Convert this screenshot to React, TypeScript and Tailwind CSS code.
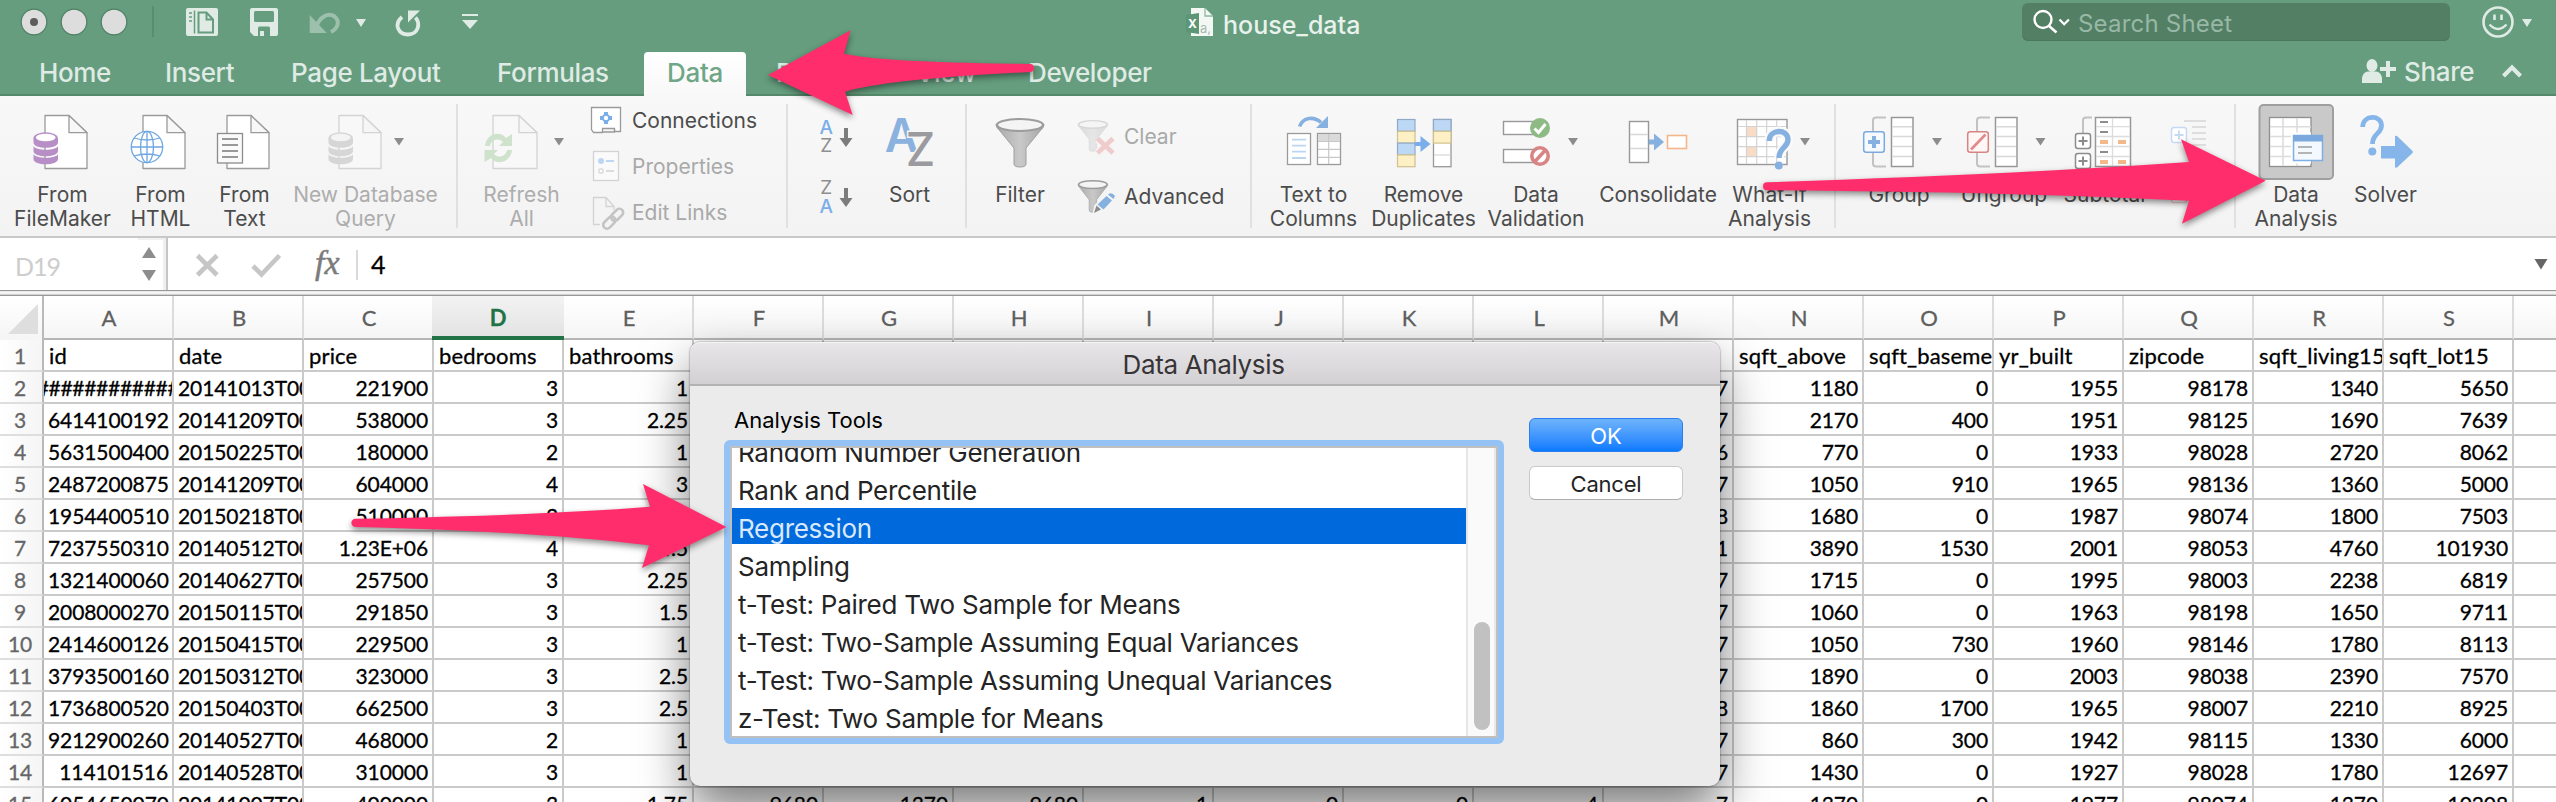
import type { ReactNode } from "react";

const COLS = "ABCDEFGHIJKLMNOPQRS".split("");

const HEAD: Record<string, string> = {
  A: "id", B: "date", C: "price", D: "bedrooms", E: "bathrooms",
  N: "sqft_above", O: "sqft_basement", P: "yr_built", Q: "zipcode", R: "sqft_living15", S: "sqft_lot15",
};

// A, B, C, D, E | M | N, O, P, Q, R, S
const DATA: string[][] = [
  ["############", "20141013T000000", "221900", "3", "1", "7", "1180", "0", "1955", "98178", "1340", "5650"],
  ["6414100192", "20141209T000000", "538000", "3", "2.25", "7", "2170", "400", "1951", "98125", "1690", "7639"],
  ["5631500400", "20150225T000000", "180000", "2", "1", "6", "770", "0", "1933", "98028", "2720", "8062"],
  ["2487200875", "20141209T000000", "604000", "4", "3", "7", "1050", "910", "1965", "98136", "1360", "5000"],
  ["1954400510", "20150218T000000", "510000", "3", "2", "8", "1680", "0", "1987", "98074", "1800", "7503"],
  ["7237550310", "20140512T000000", "1.23E+06", "4", "4.5", "11", "3890", "1530", "2001", "98053", "4760", "101930"],
  ["1321400060", "20140627T000000", "257500", "3", "2.25", "7", "1715", "0", "1995", "98003", "2238", "6819"],
  ["2008000270", "20150115T000000", "291850", "3", "1.5", "7", "1060", "0", "1963", "98198", "1650", "9711"],
  ["2414600126", "20150415T000000", "229500", "3", "1", "7", "1050", "730", "1960", "98146", "1780", "8113"],
  ["3793500160", "20150312T000000", "323000", "3", "2.5", "7", "1890", "0", "2003", "98038", "2390", "7570"],
  ["1736800520", "20150403T000000", "662500", "3", "2.5", "8", "1860", "1700", "1965", "98007", "2210", "8925"],
  ["9212900260", "20140527T000000", "468000", "2", "1", "7", "860", "300", "1942", "98115", "1330", "6000"],
  ["114101516", "20140528T000000", "310000", "3", "1", "7", "1430", "0", "1927", "98028", "1780", "12697"],
  ["6054650070", "20141007T000000", "400000", "3", "1.75", "7", "1370", "0", "1977", "98074", "1370", "10208"],
];
const SLOT: Record<string, number> = { A: 0, B: 1, C: 2, D: 3, E: 4, M: 5, N: 6, O: 7, P: 8, Q: 9, R: 10, S: 11 };
const LAST: Record<string, string> = { F: "9680", G: "1370", H: "9680", I: "1", J: "0", K: "0", L: "4" };

const TOOLS = [
  "Random Number Generation",
  "Rank and Percentile",
  "Regression",
  "Sampling",
  "t-Test: Paired Two Sample for Means",
  "t-Test: Two-Sample Assuming Equal Variances",
  "t-Test: Two-Sample Assuming Unequal Variances",
  "z-Test: Two Sample for Means",
];

/* ---------- ribbon pieces ---------- */

function Sep() {
  return <div className="mt-2 h-[124px] w-[2px] shrink-0 bg-[#e0e0e0]" />;
}

/* Ribbon artwork shares one coordinate space; x is the left edge of the item in it. */
function Art({ x, w, h = 86, y = 96, children }: { x: number; w: number; h?: number; y?: number; children: ReactNode }) {
  return (
    <svg className="block shrink-0" width={w} height={h} viewBox={`${x} ${y} ${w} ${h}`} fill="none">
      {children}
    </svg>
  );
}

function Item({ x, w, label, dim, children }: { x: number; w: number; label: string[]; dim?: boolean; children: ReactNode }) {
  return (
    <div className="flex shrink-0 flex-col items-center" style={{ width: w }}>
      <Art x={x} w={w}>{children}</Art>
      <div className={`whitespace-nowrap pl-px pt-px text-center text-[21px] leading-6 ${dim ? "text-[#adadad]" : "text-[#4c4c4c]"}`}>
        {label.map((l) => <div key={l}>{l}</div>)}
      </div>
    </div>
  );
}

function Doc({ x, w = 42, dim }: { x: number; w?: number; dim?: boolean }) {
  const s = dim ? "#d3d3d3" : "#9a9a9a";
  const r = x + w;
  return (
    <g stroke={s} strokeWidth="1.3" strokeLinejoin="round">
      <path d={`M${x} 115.5H${r - 18}L${r} 132.7V168.5H${x}Z`} fill={dim ? "#f8f8f8" : "#fff"} />
      <path d={`M${r - 18} 115.5V132.7H${r}Z`} fill={dim ? "#f6f6f6" : "#f8f8f8"} />
    </g>
  );
}

function Db({ x, c, top }: { x: number; c: string; top: string }) {
  return (
    <g fill={c}>
      {[0, 8.5, 16.5].map((d) => (
        <path key={d} d={`M${x} ${137.5 + d}v5c0 7 24.500 7 24.500 0v-5c-2 5-22.500 5-24.500 0z`} />
      ))}
      <ellipse cx={x + 12.2} cy="138" rx="12.200" ry="5.800" />
      <ellipse cx={x + 12.2} cy="137.500" rx="9.800" ry="3.800" fill={top} />
    </g>
  );
}

function Tri({ x, y = 138, w = 10, h = 7.5, c = "#8c8c8c" }: { x: number; y?: number; w?: number; h?: number; c?: string }) {
  return <path d={`M${x} ${y}h${w}l${-w / 2} ${h}z`} fill={c} />;
}

function ColBox({ x }: { x: number }) {
  return (
    <g>
      <rect x={x} y="117.500" width="21.500" height="49" fill="#fff" stroke="#989898" strokeWidth="1.500" />
      <path d={`M${x + 1} 126.700h19.500M${x + 1} 136.500h19.500M${x + 1} 146.500h19.500M${x + 1} 156.500h19.500`} stroke="#d8d8d8" strokeWidth="1.400" />
    </g>
  );
}

function Bracket({ x }: { x: number }) {
  return <path d={`M${x + 13} 117.500h-10q-3 0-3 3v43q0 3 3 3h10`} stroke="#c2c2c2" strokeWidth="2" />;
}

function Letter({ x, y, s, c, w = 400, children }: { x: number; y: number; s: number; c: string; w?: number; children: string }) {
  return <text x={x} y={y} fontSize={s} fontWeight={w} fill={c} textAnchor="middle" fontFamily="Inter, sans-serif">{children}</text>;
}

function Funnel({ t }: { t: string }) {
  return (
    <g transform={t}>
      <path d="M0 6C0 9 2 11 4 13L18 30V46q0 3 6 3t6-3V30L44 13C46 11 48 9 48 6z" fill="url(#steel)" stroke="#a0a0a0" strokeWidth="1" />
      <ellipse cx="24" cy="7" rx="23" ry="6" fill="#f4f4f4" stroke="#9c9c9c" strokeWidth="2.200" />
    </g>
  );
}

function PlusBox({ x, y, s = 15, c }: { x: number; y: number; s?: number; c: string }) {
  const m = s / 2;
  return (
    <g stroke={c}>
      <rect x={x} y={y} width={s} height={s} rx="2.500" fill="#fff" strokeWidth="1.500" />
      <path d={`M${x + 3} ${y + m}h${s - 6}M${x + m} ${y + 3}v${s - 6}`} strokeWidth="2" />
    </g>
  );
}

function Question({ t, w = 5.4, c }: { t: string; w?: number; c: string }) {
  return (
    <g transform={t}>
      <path d="M2.700 11C2.700 -1.500 21.500 -1.500 21.500 9.500C21.500 18 12.500 17 12.500 28" stroke={c} strokeWidth={w} />
      <circle cx="12.300" cy="35.500" r="4" fill={c} />
    </g>
  );
}

function SmallRow({ art, label, dim }: { art: ReactNode; label: string; dim?: boolean }) {
  return (
    <div className="flex h-[46px] items-center">
      {art}
      <span className={`text-[21px] leading-6 ${dim ? "text-[#a9a9a9]" : "text-[#4c4c4c]"}`}>{label}</span>
    </div>
  );
}

function Ribbon() {
  return (
    <div className="flex h-[142px] shrink-0 border-b-2 border-[#c8c8c8] bg-gradient-to-b from-[#f8f8f8] to-[#f3f3f3] pl-3">
      <svg width="0" height="0" className="block">
        <defs>
          <linearGradient id="steel"><stop offset="0" stopColor="#a9a9a9" /><stop offset=".5" stopColor="#c9c9c9" /><stop offset="1" stopColor="#a6a6a6" /></linearGradient>
        </defs>
      </svg>
      <Item x={12} w={100} label={["From", "FileMaker"]}>
        <Doc x={45} /><Db x={33.5} c="#b78fc6" top="#fff" />
      </Item>
      <Item x={112} w={96} label={["From", "HTML"]}>
        <Doc x={143} />
        <g stroke="#6ea6e0" strokeWidth="1.300">
          <circle cx="147" cy="147" r="15.700" fill="#fff" />
          <ellipse cx="147" cy="147" rx="6.500" ry="15.700" />
          <path d="M147 131v32M131 147h32M134 138q13 4 26 0M134 156q13 -4 26 0" />
        </g>
      </Item>
      <Item x={208} w={72} label={["From", "Text"]}>
        <Doc x={227} />
        <rect x="217.500" y="133.500" width="25" height="29.500" fill="#fafafa" stroke="#8c8c8c" strokeWidth="1.300" />
        <path d="M222 139h16M222 145h16M222 151h16M222 157h16" stroke="#999" strokeWidth="1.800" />
      </Item>
      <Item x={280} w={170} label={["New Database", "Query"]} dim>
        <Doc x={339} dim /><Db x={328.5} c="#d6d6d6" top="#f4f4f4" /><Tri x={394} />
      </Item>
      <div className="w-[6px] shrink-0" />
      <Sep />
      <Item x={458} w={126} label={["Refresh", "All"]} dim>
        <Doc x={493} w={44} dim /><Tri x={554} />
        <g fill="#cfe2cc">
          <path d="M485 146C486 134 500 130 506 138L512 134V146H499L503 142C498 137 491 140 490 146z" />
          <path d="M512 150C511 162 497 166 491 158L484.500 162V150H498L494 154C499 159 506 156 507 150z" />
        </g>
      </Item>
      <div className="flex w-[202px] shrink-0 flex-col pt-[2px]">
        <SmallRow label="Connections" art={
          <Art x={584} w={48} y={98} h={46}>
            <path d="M591.500 107.500h29v24h-6v-3h-12v4h-9l-2-3z" fill="#fff" stroke="#9a9a9a" strokeWidth="1.300" />
            <path d="M602.500 132h12v-3" stroke="#9a9a9a" strokeWidth="1.300" />
            <rect x="604" y="112" width="4" height="4" fill="#79aeea" /><rect x="604" y="120" width="4" height="4" fill="#79aeea" />
            <rect x="600" y="116" width="4" height="4" fill="#79aeea" /><rect x="608" y="116" width="4" height="4" fill="#79aeea" />
            <circle cx="606" cy="118" r="3.200" stroke="#79aeea" strokeWidth="2" />
          </Art>} />
        <SmallRow dim label="Properties" art={
          <Art x={584} w={48} y={144} h={46}>
            <rect x="593.500" y="151.500" width="25" height="29" fill="#fafafa" stroke="#d3d3d3" strokeWidth="1.300" />
            <circle cx="601" cy="161" r="3" fill="#bcd7f4" /><path d="M606 161h8" stroke="#bcd7f4" strokeWidth="2" />
            <circle cx="601" cy="171" r="2.200" stroke="#dcdcdc" strokeWidth="1.500" /><path d="M606 171h8" stroke="#dcdcdc" strokeWidth="2" />
          </Art>} />
        <SmallRow dim label="Edit Links" art={
          <Art x={584} w={48} y={190} h={46}>
            <path d="M600 224.500H593.500V197.500H606L614 206.500M606 197.500V206.500H614V210" stroke="#d3d3d3" strokeWidth="1.300" />
            <g transform="rotate(-45 613 218.500)" stroke="#c4c4c4" strokeWidth="2.600">
              <rect x="600.500" y="215" width="14" height="7.500" rx="3.700" /><rect x="611.500" y="215" width="14" height="7.500" rx="3.700" />
            </g>
          </Art>} />
      </div>
      <Sep />
      <Art x={788} w={82} h={140}>
        <Letter x={826.3} y={134} s={19} c="#7aaeea" w={500}>A</Letter>
        <Letter x={826.3} y={152} s={19} c="#8e8e8e">Z</Letter>
        <path d="M844 128h4v10h4.500l-6.500 9-6.500-9h4.500z" fill="#7c7c7c" />
        <Letter x={826.3} y={194} s={19} c="#8e8e8e">Z</Letter>
        <Letter x={826.3} y={212.5} s={19} c="#7aaeea" w={500}>A</Letter>
        <path d="M844 188h4v10h4.500l-6.500 9-6.500-9h4.500z" fill="#7c7c7c" />
      </Art>
      <Item x={870} w={78} label={["Sort"]}>
        <Letter x={901.5} y={152} s={46} c="#8bb2df" w={600}>A</Letter>
        <text x="920.500" y="166" fontSize="46" fontWeight="500" fill="#9b9b9f" stroke="#f6f6f6" strokeWidth="3" paintOrder="stroke" textAnchor="middle" fontFamily="Inter, sans-serif">Z</text>
      </Item>
      <div className="w-[17px] shrink-0" />
      <Sep />
      <Item x={967} w={105} label={["Filter"]}><Funnel t="translate(996 118)" /></Item>
      <div className="flex w-[178px] shrink-0 flex-col pt-[11px]">
        <div className="flex h-[59px] items-center">
          <Art x={1072} w={52} y={107} h={59}>
            <g opacity=".35"><Funnel t="translate(1078 120) scale(.62 .64)" /></g>
            <path d="M1098 139l15 14M1113 139l-15 14" stroke="#f5f5f5" strokeWidth="8" />
            <path d="M1097.500 138.500l15.500 14.500M1113 138.500l-15.500 14.500" stroke="#efcbcb" strokeWidth="4.500" />
          </Art>
          <span className="text-[21px] leading-6 text-[#a9a9a9]">Clear</span>
        </div>
        <div className="flex h-[59px] items-center">
          <Art x={1072} w={52} y={166} h={59}>
            <Funnel t="translate(1078 180) scale(.62 .66)" />
            <path d="M1092.500 214l2-9 14-13 7.500 6-14 14z" fill="#f5f5f5" />
            <path d="M1094 213l2.500-7.500 4.500 4z" fill="#8c8c8c" />
            <path d="M1097.500 204.500l9-8.500 5.500 4.500-8.500 9z" fill="#86b0e0" />
            <path d="M1108 194.800l1.500-1.300q3-1 5.500 2.500l-1.500 3z" fill="#86b0e0" />
          </Art>
          <span className="pt-[2px] text-[21px] leading-6 text-[#4c4c4c]">Advanced</span>
        </div>
      </div>
      <Sep />
      <Item x={1252} w={122} label={["Text to", "Columns"]}>
        <path d="M1299.500 126.500C1303 117 1314 116 1321 122.500" stroke="#86b0e0" strokeWidth="3.600" />
        <path d="M1328 116v12h-12z" fill="#86b0e0" />
        <rect x="1287.500" y="133.500" width="23" height="31" fill="#fff" stroke="#9a9a9a" strokeWidth="1.300" />
        <path d="M1292 139.700h14M1292 145.700h14M1292 151.700h14M1292 158h14" stroke="#bcd6f1" strokeWidth="1.800" />
        <rect x="1317.500" y="133.500" width="23" height="31" fill="#fff" stroke="#9a9a9a" strokeWidth="1.300" />
        <rect x="1318" y="134" width="22" height="7.500" fill="#dadada" />
        <path d="M1328.700 134v30M1318 141.500h22M1318 149.300h22M1318 157.300h22" stroke="#c8c8c8" strokeWidth="1.200" />
      </Item>
      <Item x={1374} w={98} label={["Remove", "Duplicates"]}>
        {["#bcd8f4", "#fdf0c4", "#bcd8f4", "#fdf0c4"].map((c, i) => (
          <rect key={i} x="1397.500" y={119.5 + i * 11.8} width="17.500" height="11.800" fill={c} stroke={i % 2 ? "#cfc08e" : "#8fa9c6"} strokeWidth="1.200" />
        ))}
        <rect x="1433.500" y="119.500" width="17.500" height="47.200" fill="#fff" stroke="#989898" strokeWidth="1.300" />
        <rect x="1433.500" y="119.500" width="17.500" height="11.800" fill="#bcd8f4" stroke="#8fa9c6" strokeWidth="1.200" />
        <rect x="1433.500" y="131.300" width="17.500" height="11.800" fill="#fdf0c4" stroke="#cfc08e" strokeWidth="1.200" />
        <path d="M1434 155h16.500" stroke="#d8d8d8" strokeWidth="1.300" />
        <path d="M1415 142h5.500v-6l10 8-10 8v-6h-5.500z" fill="#7aaeea" />
      </Item>
      <Item x={1472} w={127} label={["Data", "Validation"]}>
        <rect x="1503.500" y="121.500" width="32" height="13" fill="#fff" stroke="#989898" strokeWidth="1.400" />
        <rect x="1503.500" y="149.500" width="32" height="13" fill="#fff" stroke="#989898" strokeWidth="1.400" />
        <circle cx="1540" cy="128" r="10" fill="#8ebb85" />
        <path d="M1534.500 128.500l4 4 7-8.500" stroke="#fff" strokeWidth="3" />
        <circle cx="1540" cy="156" r="8.200" fill="#fff" stroke="#d98484" strokeWidth="3.600" />
        <path d="M1545 150.500l-10 11" stroke="#d98484" strokeWidth="3.400" />
        <Tri x={1568} />
      </Item>
      <Item x={1599} w={117} label={["Consolidate"]}>
        <rect x="1629.500" y="121.500" width="19" height="41" fill="#fff" stroke="#989898" strokeWidth="1.400" />
        <path d="M1630 134.500h18M1630 148.500h18" stroke="#d8d8d8" strokeWidth="1.300" />
        <path d="M1649 139.500h5v-6l10 8.500-10 8.500v-6h-5z" fill="#86b0e0" />
        <rect x="1667.500" y="135.500" width="19" height="13" fill="#fff" stroke="#f3b68a" strokeWidth="1.600" />
      </Item>
      <Item x={1716} w={106} label={["What-If", "Analysis"]}>
        <rect x="1737.500" y="119.500" width="49.500" height="45" fill="#fff" stroke="#989898" strokeWidth="1.400" />
        <rect x="1746.500" y="126.500" width="10" height="10" fill="#f9dcc5" /><rect x="1746.500" y="146.700" width="10" height="10" fill="#f9dcc5" />
        <path d="M1746.500 120v44M1756.700 120v44M1766.700 120v44M1776.700 120v44M1738 126.500h48.500M1738 136.700h48.500M1738 146.700h48.500M1738 156.700h48.500" stroke="#d3d3d3" strokeWidth="1.200" />
        <Question t="translate(1766.500 130)" w={10} c="#fafafa" />
        <Question t="translate(1766.500 130)" c="#86b0e0" />
        <Tri x={1800} />
      </Item>
      <div className="w-[12px] shrink-0" />
      <Sep />
      <Item x={1836} w={125} label={["Group"]}>
        <Bracket x={1873} /><ColBox x={1891.5} />
        <rect x="1863.700" y="131.700" width="20.600" height="20.600" rx="2.500" fill="#f6faff" stroke="#7ea9dc" strokeWidth="1.500" />
        <path d="M1868 142h12M1874 136v12" stroke="#86b0e0" strokeWidth="4" />
        <Tri x={1932} />
      </Item>
      <Item x={1961} w={85} label={["Ungroup"]}>
        <Bracket x={1977} /><ColBox x={1995.5} />
        <rect x="1967.700" y="131.700" width="20.600" height="20.600" rx="2.500" fill="#fff6f6" stroke="#d98484" strokeWidth="1.500" />
        <path d="M1971 149.500l14.500-15" stroke="#e08b8b" strokeWidth="2.600" />
        <Tri x={2035.5} />
      </Item>
      <Item x={2046} w={116} label={["Subtotal"]}>
        <path d="M2092 117.500h-6q-3 0-3 3v13" stroke="#c2c2c2" strokeWidth="2" />
        <rect x="2095.500" y="117.500" width="35" height="49" fill="#fff" stroke="#989898" strokeWidth="1.500" />
        <path d="M2112.500 118v48M2096 126.700h34M2096 136.500h34M2096 146.500h34M2096 156.500h34" stroke="#dcdcdc" strokeWidth="1.300" />
        <path d="M2100 122h8M2100 132h8M2100 152h8" stroke="#8c8c8c" strokeWidth="2" />
        <path d="M2100 142h8M2118 142h8M2100 162h8M2118 162h8" stroke="#f3b98a" strokeWidth="4" />
        <PlusBox x={2075.5} y={133.5} c="#8c8c8c" /><PlusBox x={2075.5} y={153.5} c="#8c8c8c" />
      </Item>
      <Art x={2162} w={72} h={140}>
        <path d="M2184 121h22M2192 127h14M2192 133h14M2192 139h14M2192 145h14" stroke="#dedede" strokeWidth="1.800" />
        <PlusBox x={2171.5} y={127.5} c="#c6dbf3" />
        <rect x="2171.500" y="187.500" width="15" height="15" rx="2.500" fill="#fff" stroke="#efcaca" strokeWidth="1.500" />
      </Art>
      <Sep />
      <Item x={2236} w={119} label={["Data", "Analysis"]}>
        <rect x="2259.500" y="105" width="73.500" height="74" rx="4" fill="#c9c9c9" stroke="#9f9f9f" strokeWidth="2" />
        <rect x="2269.500" y="117.500" width="41.500" height="49" fill="#fff" stroke="#8f8f8f" strokeWidth="1.300" />
        <path d="M2283 118v48M2297 118v48M2270 126.700h41M2270 136.500h41M2270 146.500h41M2270 156.500h41" stroke="#dcdcdc" strokeWidth="1.600" />
        <rect x="2291" y="132.500" width="20" height="31" fill="#fff" />
        <rect x="2293.500" y="135.500" width="29" height="25" fill="#f4f8ff" stroke="#7eaee6" strokeWidth="1.500" />
        <rect x="2293" y="135" width="30" height="6.500" fill="#7ba9de" />
        <path d="M2298 147h14M2298 153h14" stroke="#b4b4b4" strokeWidth="1.800" />
      </Item>
      <Item x={2355} w={60} label={["Solver"]}>
        <Question t="translate(2360 116)" c="#86b5ea" w={4.8} />
        <path d="M2381 146h14v-9q0-2 2-1l15.500 15q1 1 0 2l-15.500 14.500q-2 1-2-1v-8h-14z" fill="#86b5ea" />
      </Item>
    </div>
  );
}

/* ---------- window chrome ---------- */

const LIGHT = "#dfebe4";

function TitleBar() {
  return (
    <div className="flex h-[44px] shrink-0 items-start">
      <svg className="block shrink-0" width="500" height="44" viewBox="0 0 500 44" fill="none">
        {[34, 74, 114].map((x) => <circle key={x} cx={x} cy="22" r="12.800" fill="#dddddd" stroke="#4f8065" strokeWidth="1.200" />)}
        <circle cx="34" cy="22" r="4" fill="#5d5d5d" />
        <path d="M153 6v31" stroke="#558a6b" strokeWidth="1.600" />
        <rect x="186" y="8" width="32" height="28" rx="2" fill={LIGHT} />
        <path d="M194.500 10.500v23M189 13h3M189 17h3M189 21h3" stroke="#659d7e" strokeWidth="1.500" />
        <path d="M198.500 12.500h8l6.500 7v13h-14.500zM206.500 12.500v7h6.500" stroke="#659d7e" strokeWidth="2" />
        <path d="M252 8h24q2 0 2 2v24q0 2-2 2h-22l-4-4V10q0-2 2-2z" fill={LIGHT} />
        <rect x="254" y="11" width="20" height="11" rx="1.500" fill="#659d7e" />
        <path d="M258 36v-8q0-1.500 1.500-1.500h9q1.500 0 1.500 1.500v8h-6v-5h-4v5z" fill="#659d7e" />
        <path d="M309.700 15v18h17z" fill="#9cc0ab" />
        <path d="M316 27C320 17 328 12 334.500 16.500C340 21 338.500 28 331 32" stroke="#9cc0ab" strokeWidth="4" />
        <Tri x={356} y={19} h={8} c={LIGHT} />
        <path d="M402 17C393 25 399 34.500 408 34.500C418 34.500 421 24 415.500 17.500" stroke={LIGHT} strokeWidth="3.800" />
        <path d="M408 10.500h12l-12 12z" fill={LIGHT} />
        <path d="M462 15h16" stroke={LIGHT} strokeWidth="2" />
        <Tri x={462} y={20} w={16} h={9} c={LIGHT} />
      </svg>
      <div className="flex flex-1 pl-[686px]">
        <svg className="mt-2 block shrink-0" width="28" height="30" viewBox="0 0 28 30" fill="none">
          <path d="M5 0h14l8 8v20H5z" fill="#f3f8f5" />
          <path d="M19 0v8h8" stroke="#8fb79f" strokeWidth="1.300" />
          <path d="M0 7l13-2v21l-13-2z" fill="#5d9676" />
          <text x="6.500" y="20" fontSize="12" fontWeight="700" fill="#fff" textAnchor="middle" fontFamily="Inter, sans-serif">X</text>
          <text x="19.500" y="25" fontSize="13" fill="#a9b8af" textAnchor="middle" fontFamily="Inter, sans-serif">a,</text>
        </svg>
        <span className="ml-[9px] mt-[9px] text-[25px] font-medium leading-8 tracking-[0px] text-[#e9f2ed]">house_data</span>
      </div>
      <div className="mt-[3px] flex h-[38px] w-[428px] shrink-0 items-center rounded-md border-b border-[#4c775d] bg-[#537f65]">
        <svg className="block shrink-0" width="56" height="38" viewBox="2022 3 56 38" fill="none" stroke="#fff">
          <circle cx="2043" cy="19.500" r="8.500" strokeWidth="2.400" />
          <path d="M2048.500 25.500l8 7" strokeWidth="2.600" />
          <path d="M2059.500 19.500l4.700 4.700 4.700-4.700" strokeWidth="2.200" />
        </svg>
        <span className="pt-[4px] text-[24px] leading-8 tracking-[0.2px] text-[#98b8a5]">Search Sheet</span>
      </div>
      <svg className="block shrink-0" width="106" height="44" viewBox="2450 0 106 44" fill="none" stroke={LIGHT}>
        <circle cx="2498" cy="22" r="14.500" strokeWidth="2.600" />
        <path d="M2494.500 14.500v5.500M2501.500 14.500v5.500" strokeWidth="2.600" />
        <path d="M2489.500 24.500q8.500 9 17 0" strokeWidth="2.400" />
        <g stroke="none"><Tri x={2522} y={19} h={8} c={LIGHT} /></g>
      </svg>
    </div>
  );
}

function Tabs() {
  return (
    <div className="flex h-[52px] shrink-0 border-b-2 border-[#55896a] text-[26px] font-medium leading-[32px] tracking-[-0.35px] text-[#dfebe4]">
      <div className="ml-[39px] w-[126px] pt-[13px]">Home</div>
      <div className="w-[126px] pt-[13px]">Insert</div>
      <div className="w-[206px] whitespace-nowrap pt-[13px]">Page Layout</div>
      <div className="w-[147px] pt-[13px]">Formulas</div>
      <div className="mt-[8px] h-[44px] w-[102px] rounded-t bg-gradient-to-b from-white to-[#f8f8f8] pt-[5px] text-center text-[#6fa686]">Data</div>
      <div className="w-[144px] pl-[30px] pt-[13px]">Review</div>
      <div className="w-[138px] pl-[26px] pt-[13px]">View</div>
      <div className="flex-1 pt-[13px]">Developer</div>
      <svg className="block shrink-0" width="44" height="50" viewBox="2360 44 44 50" fill="none">
        <ellipse cx="2372" cy="65.500" rx="5.500" ry="6.500" fill={LIGHT} />
        <path d="M2362 83v-5q1-6 6-6.500h8q5 .5 6 6.500v5z" fill={LIGHT} />
        <path d="M2380 69h16M2388 61v16" stroke={LIGHT} strokeWidth="4" />
      </svg>
      <div className="w-[90px] pt-[12px]">Share</div>
      <svg className="block shrink-0" width="62" height="50" viewBox="2494 44 62 50" fill="none">
        <path d="M2503.500 76l8.500-8.500 8.500 8.500" stroke={LIGHT} strokeWidth="4.200" />
      </svg>
    </div>
  );
}

function FormulaBar() {
  return (
    <div className="flex h-[52px] shrink-0 bg-white font-['Lato',sans-serif]">
      <div className="flex w-[168px] shrink-0 items-center justify-between border-r-2 border-[#c6c6c6] pl-[15px]">
        <span className="pt-[4px] text-[25px] leading-8 tracking-[-1px] text-[#cdcdcd]">D19</span>
        <svg className="block" width="28" height="52" viewBox="138 238 28 52">
          <path d="M142 258h14l-7-11zM142 270h14l-7 11z" fill="#8d8d8d" />
          <path d="M138 238h28v52h-3v-50h-25z" fill="#f0f0f0" />
        </svg>
      </div>
      <svg className="block shrink-0" width="200" height="52" viewBox="168 238 200 52" fill="none">
        <path d="M197.500 255.500l19.500 19.500M217 255.500l-19.500 19.500" stroke="#c6c6c6" strokeWidth="4.600" />
        <path d="M253 266l8.500 8.500 18-19" stroke="#c6c6c6" strokeWidth="4.600" />
        <text x="315" y="273.500" fontSize="34" fontStyle="italic" fill="#7b7b7b" fontFamily="'Liberation Serif', serif" stroke="#7b7b7b" strokeWidth=".5">fx</text>
        <path d="M357 250v30" stroke="#dadada" strokeWidth="2" />
      </svg>
      <span className="flex-1 pl-[3px] pt-[10px] text-[25px] leading-8 text-black [-webkit-text-stroke:0.3px]">4</span>
      <svg className="block shrink-0" width="30" height="52" viewBox="2526 238 30 52"><Tri x={2534.5} y={259} w={13} h={10.5} c="#666" /></svg>
    </div>
  );
}

/* ---------- sheet ---------- */

const CELL = "h-8 w-[130px] shrink-0 overflow-hidden whitespace-nowrap border-b-2 border-r-2 border-[#cacaca] px-[4px] pt-px leading-[30px]";

function Sheet() {
  return (
    <div className="min-h-0 flex-1 overflow-hidden bg-white font-['Lato',sans-serif] text-[21px] tracking-[-0.1px] text-black [-webkit-text-stroke:0.3px]">
      <div className="flex h-[44px] w-[2644px] bg-gradient-to-b from-white to-[#f5f5f5] text-[22px]">
        <div className="w-[44px] shrink-0 border-r-2 border-r-[#b9b9b9]">
          <svg className="block" width="42" height="42" viewBox="0 0 42 42"><path d="M8 38h30V8z" fill="#dedede" /></svg>
        </div>
        {COLS.map((c) =>
          c === "D" ? (
            <div key={c} className="-ml-[2px] w-[132px] shrink-0 border-b-4 border-[#217346] bg-gradient-to-b from-[#f3f3f3] to-[#e3e3e3] pt-[2px] text-center font-bold leading-[40px] text-[#217346]">D</div>
          ) : (
            <div key={c} className="w-[130px] shrink-0 border-b-2 border-r-2 border-b-[#b5b5b5] border-r-[#dcdcdc] pl-[2px] pt-[2px] text-center leading-[40px] text-[#5f5f5f]">{c}</div>
          ),
        )}
        <div className="w-[130px] shrink-0 border-b-2 border-[#b5b5b5]" />
      </div>
      {[null, ...DATA].map((row, i) => (
        <div key={i} className="flex h-8 w-[2644px]">
          <div className="w-[44px] shrink-0 border-b-2 border-r-2 border-b-[#dedede] border-r-[#b9b9b9] bg-gradient-to-r from-white to-[#f5f5f5] pr-[2px] pt-px text-center leading-[30px] text-[#666]">{i + 1}</div>
          {COLS.map((c) => {
            if (!row) return <div key={c} className={`${CELL} pl-[5px] text-[22px] tracking-[0.15px]`}>{HEAD[c] ?? ""}</div>;
            const v = SLOT[c] !== undefined ? row[SLOT[c]] : i === 14 ? LAST[c] ?? "" : "";
            if (v.startsWith("#")) return <div key={c} className={`${CELL} flex justify-center tracking-[-0.3px]`}><span>{v}</span></div>;
            return <div key={c} className={`${CELL} ${c === "B" ? "text-left" : "text-right"}`}>{v}</div>;
          })}
          <div className={CELL} />
        </div>
      ))}
    </div>
  );
}

/* ---------- dialog ---------- */

function Dialog() {
  return (
    <div className="absolute left-[690px] top-[342px] flex h-[444px] w-[1030px] flex-col overflow-visible rounded-[10px] bg-[#ebebeb] shadow-[0_24px_50px_rgba(0,0,0,0.52),0_0_2px_rgba(0,0,0,0.6)]">
      <div className="flex h-[44px] shrink-0 items-center justify-center rounded-t-[10px] border-b-2 border-t border-[#b4b2b4] border-t-[#f6f5f6] bg-gradient-to-b from-[#e9e6e9] to-[#d2d0d2] pr-[3px] pt-[2px] text-[26px] tracking-[-0.35px] text-[#373437]">Data Analysis</div>
      <div className="flex px-[34px]">
        <div className="w-[780px] pt-[20px]">
          <div className="pl-[10px] text-[22px] leading-7 text-black">Analysis Tools</div>
          <div className="mt-[6px] h-[304px] rounded-[6px] bg-[#94c2f4] p-[6px]">
            <div className="flex h-[292px] overflow-hidden border-2 border-[#bfbfbf] bg-white">
              <div className="-mt-[16px] w-[734px]">
                {TOOLS.map((t) => (
                  <div key={t} className={`mb-[2px] h-[36px] whitespace-nowrap pl-[6px] pt-[5px] text-[26px] leading-[32px] tracking-[-0.27px] ${t === "Regression" ? "bg-[#0069dc] text-[#d9e9fb]" : "text-[#242424]"}`}>{t}</div>
                ))}
              </div>
              <div className="w-[30px] border-l-2 border-r-2 border-l-[#e6e6e6] border-r-[#e9e9e9] bg-[#fafafa] pl-[6px] pt-[174px]">
                <div className="h-[108px] w-[16px] rounded-full bg-[#c1c1c1]" />
              </div>
            </div>
          </div>
        </div>
        <div className="ml-[25px] flex w-[154px] flex-col gap-[14px] pt-[32px] text-[22px]">
          <div className="flex h-[34px] items-center justify-center rounded-[6px] border border-[#2a7ff0] bg-gradient-to-b from-[#6db3fa] to-[#067aff] pt-[3px] text-white">OK</div>
          <div className="flex h-[34px] items-center justify-center rounded-[6px] border border-[#c9c9c9] border-b-[#adadad] bg-white pt-[2px] tracking-[-0.2px] text-[#242424]">Cancel</div>
        </div>
      </div>
    </div>
  );
}

function Pointers() {
  return (
    <svg className="pointer-events-none absolute left-0 top-0 drop-shadow-[0_3px_3px_rgba(0,0,0,0.45)]" width="2556" height="802" viewBox="0 0 2556 802" fill="#ff2d6b">
      <path d="M768 75L850.600 30.300L844 53.700C880 61 940 62.500 1030 64A4 4 0 0 1 1030 72C930 77 870 84 845 91.700L852.700 115Z" />
      <path d="M2265.700 180.700L2181 139.300L2189 162Q2010 174.500 1767 182.300A4 4 0 0 0 1767 190.300Q2010 192 2189 200.700L2182 223.700Z" />
      <path d="M726.400 527L643 484L650 506.700Q540 515.500 355.500 518.700A4 4 0 0 0 355.500 527Q540 531.500 649 545.300L642 568Z" />
    </svg>
  );
}

export default function App() {
  return (
    <div className="relative flex h-[802px] w-[2556px] flex-col overflow-hidden bg-white font-['Inter',sans-serif]">
      <div className="flex h-24 shrink-0 flex-col bg-[#659d7e]">
        <TitleBar />
        <Tabs />
      </div>
      <Ribbon />
      <FormulaBar />
      <div className="h-[6px] shrink-0 border-b border-t border-[#989898] bg-gradient-to-b from-[#e0e0e0] via-white to-[#c4c4c4]" />
      <Sheet />
      <Dialog />
      <Pointers />
    </div>
  );
}
